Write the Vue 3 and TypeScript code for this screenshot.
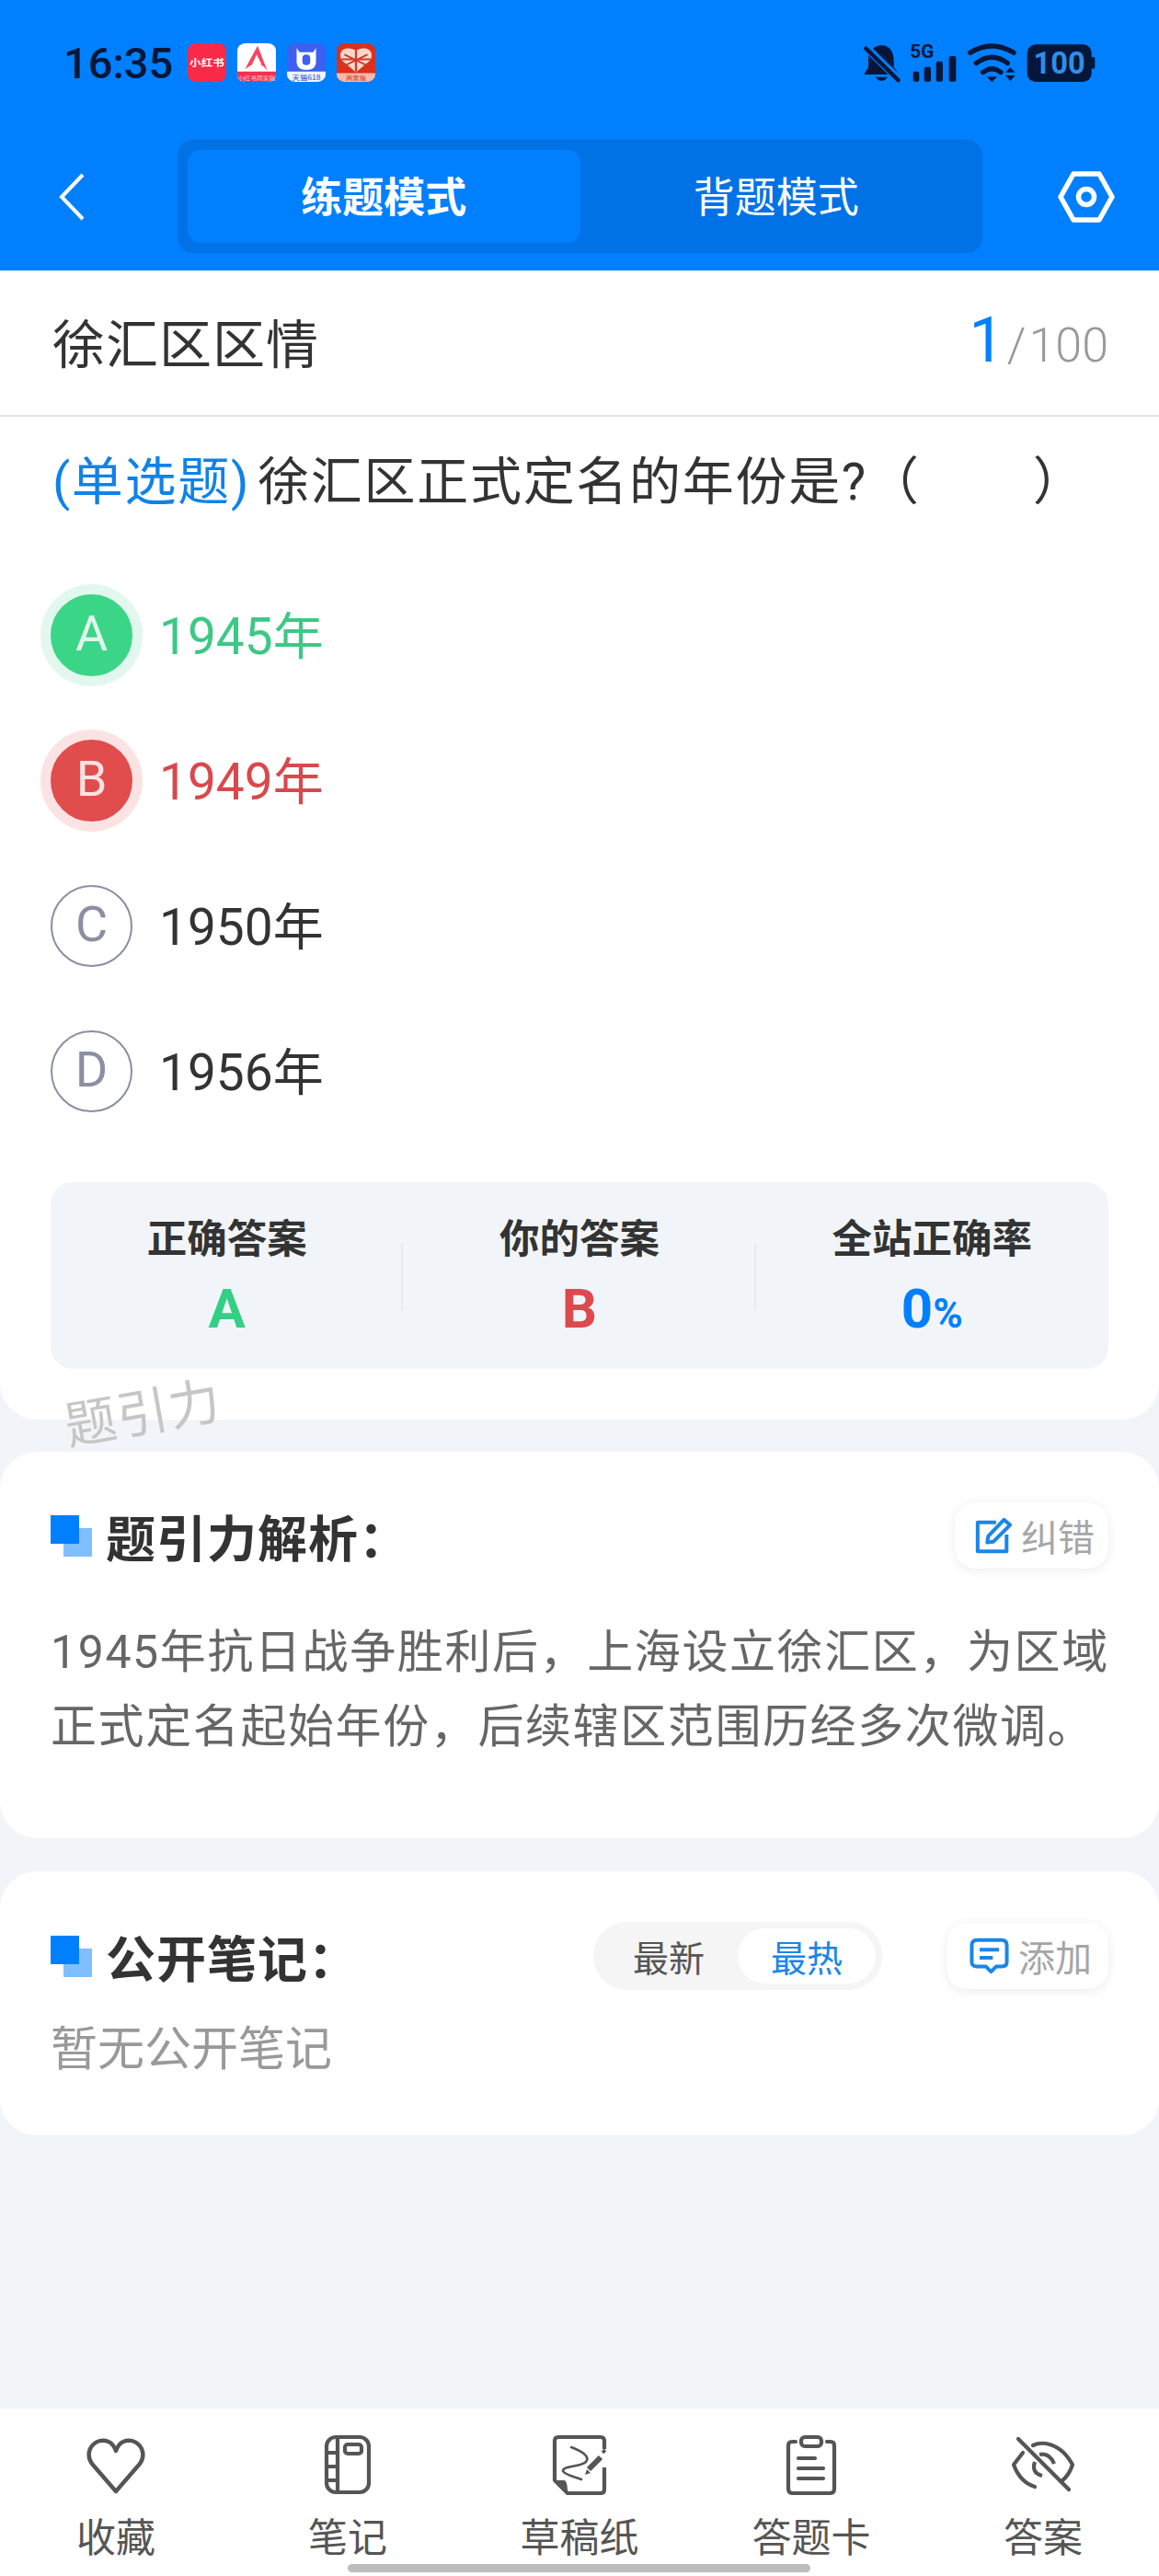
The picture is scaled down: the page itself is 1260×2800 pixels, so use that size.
<script setup lang="ts">
interface Option { key: string; text: string; state: string }
const options: Option[] = [
  { key: 'A', text: '1945年', state: 'right' },
  { key: 'B', text: '1949年', state: 'wrong' },
  { key: 'C', text: '1950年', state: '' },
  { key: 'D', text: '1956年', state: '' },
]
</script>

<template>
  <div class="page">
    <header class="header">
      <div class="status">
        <span class="time">16:35</span>
        <div class="apps">
          <svg class="app" viewBox="0 0 40 48" preserveAspectRatio="none">
            <rect width="40" height="48" rx="9" fill="#fb2a49" />
            <text x="20" y="29" font-size="12" font-weight="700" fill="#fff" text-anchor="middle" font-family="Noto Sans CJK SC">小红书</text>
          </svg>
          <svg class="app" viewBox="0 0 40 48" preserveAspectRatio="none">
            <rect width="40" height="48" rx="9" fill="#fff" />
            <path d="M0 35H40V39a9 9 0 0 1-9 9H9a9 9 0 0 1-9-9Z" fill="#f2304f" />
            <path d="M21 3L31 34Q24 22 16 26L8 32Z" fill="#f2475f" />
            <path d="M20 14L25 26L15 27Z" fill="#fff" />
            <text x="20" y="46" font-size="6.5" fill="#ffd8de" text-anchor="middle" font-family="Noto Sans CJK SC">小红书周家版</text>
          </svg>
          <svg class="app" viewBox="0 0 40 48" preserveAspectRatio="none">
            <rect width="40" height="48" rx="9" fill="#3c60f0" />
            <path d="M0 35H40V39a9 9 0 0 1-9 9H9a9 9 0 0 1-9-9Z" fill="#eef4ff" />
            <path d="M10 6L13 11H27L30 6V24Q30 33 20 33Q10 33 10 24Z" fill="#fff" />
            <rect x="16" y="14" width="8" height="13" rx="4" fill="#3c60f0" />
            <text x="20" y="46" font-size="8" fill="#2446c8" text-anchor="middle" font-family="Noto Sans CJK SC">天猫618</text>
          </svg>
          <svg class="app" viewBox="0 0 40 48" preserveAspectRatio="none">
            <rect width="40" height="48" rx="9" fill="#dc2f1e" />
            <path d="M0 37H40V39a9 9 0 0 1-9 9H9a9 9 0 0 1-9-9Z" fill="#f7b9a8" />
            <path d="M20 36L6 22Q2 16 5 10Q10 3 20 9Q30 3 35 10Q38 16 34 22Z" fill="#f8d8cc" />
            <path d="M20 9V35M8 14L32 28M32 14L8 28M5 20H35" stroke="#d13a27" stroke-width="2.2" fill="none" />
            <text x="20" y="46" font-size="7" fill="#c8321f" text-anchor="middle" font-family="Noto Sans CJK SC">商家版</text>
          </svg>
        </div>
        <svg class="sys" viewBox="0 0 810 195">
          <path d="M85 40C115 40 125 65 125 90V110L142 135H28L42 110V85C42 60 60 40 85 40Z" fill="#04173a" />
          <path d="M65 143Q85 168 105 143Z" fill="#04173a" />
          <path d="M30 42L142 152" stroke="#0080ff" stroke-width="26" />
          <path d="M34 50L140 154" stroke="#04173a" stroke-width="13" stroke-linecap="round" />
          <text x="178" y="82" font-size="62" font-weight="700" fill="#04173a" font-family="Roboto">5G</text>
          <rect x="188" y="125" width="20" height="33" rx="6" fill="#04173a" />
          <rect x="224" y="110" width="22" height="48" rx="6" fill="#04173a" />
          <rect x="263" y="92" width="22" height="66" rx="6" fill="#04173a" />
          <rect x="305" y="75" width="23" height="83" rx="6" fill="#04173a" />
          <path d="M374 64Q445 20 516 64M394 98Q445 60 496 98M416 128Q445 104 474 128" stroke="#04173a" stroke-width="16" stroke-linecap="round" fill="none" />
          <path d="M428 142H462L445 160ZM489 128H521L505 112ZM489 138H521L505 156Z" fill="#04173a" />
          <rect x="560" y="37" width="210" height="122" rx="28" fill="#04173a" />
          <rect x="768" y="78" width="13" height="38" rx="5" fill="#04173a" />
          <text x="665" y="133" font-size="98" font-weight="700" fill="#2f8ee8" text-anchor="middle" font-family="Roboto">100</text>
        </svg>
      </div>
      <nav class="nav">
        <svg class="back" viewBox="0 0 28 52">
          <path d="M26 2L3 26L26 50" stroke="#fff" stroke-width="4" fill="none" />
        </svg>
        <div class="tabs">
          <div class="tab active">练题模式</div>
          <div class="tab">背题模式</div>
        </div>
        <svg class="hex" viewBox="0 0 62 56">
          <path d="M17 3H45L59 28L45 53H17L3 28Z" stroke="#fff" stroke-width="5.5" stroke-linejoin="round" fill="none" />
          <circle cx="31" cy="28" r="8.5" stroke="#fff" stroke-width="5.5" fill="none" />
        </svg>
      </nav>
    </header>

    <section class="card main">
      <div class="title-row">
        <span class="title">徐汇区区情</span>
        <span class="count"><b>1</b><i>/</i>100</span>
      </div>
      <p class="question"><span class="qtype">(单选题)</span>徐汇区正式定名的年份是?（<span class="blank"></span>）</p>
      <div class="options">
        <div v-for="o in options" :key="o.key" class="option" :class="o.state">
          <span class="badge">{{ o.key }}</span>
          <span class="otext">{{ o.text }}</span>
        </div>
      </div>
      <div class="answers">
        <div class="ans">
          <div class="alabel">正确答案</div>
          <div class="aval green">A</div>
        </div>
        <div class="ans split">
          <div class="alabel">你的答案</div>
          <div class="aval red">B</div>
        </div>
        <div class="ans split">
          <div class="alabel">全站正确率</div>
          <div class="aval blue">0<small>%</small></div>
        </div>
      </div>
      <span class="watermark">题引力</span>
    </section>

    <section class="card analysis">
      <div class="head">
        <span class="squares"></span>
        <h2 class="htitle">题引力解析：</h2>
        <div class="btn fix">
          <svg class="bicon" viewBox="0 0 42 42">
            <path d="M24 6H3V39H36V20" stroke="#1a86e8" stroke-width="4.2" fill="none" stroke-linejoin="round" />
            <path d="M15 22L33 3L40 9L21 28L14 29Z" stroke="#1a86e8" stroke-width="4.2" fill="none" stroke-linejoin="round" />
          </svg>
          <span>纠错</span>
        </div>
      </div>
      <p class="body">1945年抗日战争胜利后，上海设立徐汇区，为区域<br />正式定名起始年份，后续辖区范围历经多次微调。</p>
    </section>

    <section class="card notes">
      <div class="head">
        <span class="squares"></span>
        <h2 class="htitle">公开笔记：</h2>
        <div class="seg">
          <span class="segitem">最新</span>
          <span class="segitem on">最热</span>
        </div>
        <div class="btn add">
          <svg class="bicon wide" viewBox="0 0 44 42">
            <path d="M8 3H36Q42 3 42 9V28Q42 33 36 33H30L24 39L18 33H8Q2 33 2 28V9Q2 3 8 3Z" stroke="#1a86e8" stroke-width="4.2" fill="none" stroke-linejoin="round" />
            <path d="M11 14H33M11 23H26" stroke="#1a86e8" stroke-width="4.2" fill="none" />
          </svg>
          <span>添加</span>
        </div>
      </div>
      <p class="empty">暂无公开笔记</p>
    </section>

    <footer class="bar">
      <div class="item">
        <svg class="ico" width="68" height="66" viewBox="0 0 68 66">
          <path d="M34 62L8 32C-2 18 12 2 26 8Q31 10 34 18Q37 10 42 8C56 2 70 18 60 32Z" stroke="#555" stroke-width="4.4" fill="none" stroke-linejoin="round" />
        </svg>
        <span>收藏</span>
      </div>
      <div class="item">
        <svg class="ico" width="52" height="66" viewBox="0 0 52 66">
          <rect x="3" y="3" width="46" height="60" rx="10" stroke="#555" stroke-width="4.2" fill="none" />
          <path d="M15 3V63M3 20H15M3 35H15M3 50H15" stroke="#555" stroke-width="4.2" fill="none" />
          <rect x="23" y="11" width="18" height="10" rx="3" stroke="#555" stroke-width="4.2" fill="none" />
        </svg>
        <span>笔记</span>
      </div>
      <div class="item">
        <svg class="ico" width="60" height="66" viewBox="0 0 60 66">
          <path d="M57 16V7Q57 3 53 3H7Q3 3 3 7V50L17 64H53Q57 64 57 60V36" stroke="#555" stroke-width="4.2" fill="none" stroke-linejoin="round" />
          <path d="M3 50H14Q17 52 17 64Z" fill="#555" />
          <path d="M21 14C32 18 42 24 37 30C30 36 11 34 12 40C14 44 24 46 32 49" stroke="#555" stroke-width="2.6" fill="none" stroke-linecap="round" />
          <path d="M53 25L40 38" stroke="#555" stroke-width="6" />
          <path d="M55 20L58 17" stroke="#555" stroke-width="3.5" />
          <path d="M38 38L36 44L42 42Z" fill="#555" />
        </svg>
        <span>草稿纸</span>
      </div>
      <div class="item">
        <svg class="ico" width="56" height="66" viewBox="0 0 56 66">
          <path d="M11 8H7Q3 8 3 12V59Q3 64 8 64H48Q53 64 53 59V12Q53 8 49 8H45" stroke="#555" stroke-width="4.2" fill="none" stroke-linecap="round" />
          <rect x="17" y="3" width="22" height="10" rx="4" stroke="#555" stroke-width="4.2" fill="none" />
          <path d="M14 26H32M14 37H41M14 48H41" stroke="#555" stroke-width="4.2" stroke-linecap="round" fill="none" />
        </svg>
        <span>答题卡</span>
      </div>
      <div class="item">
        <svg class="ico" width="70" height="66" viewBox="0 0 70 66">
          <path d="M13 20L3 33Q10 52 26 57M24 12Q30 9 38 10Q56 13 67 33Q63 45 55 51" stroke="#555" stroke-width="4.2" fill="none" stroke-linecap="round" stroke-linejoin="round" />
          <path d="M8 5L63 60" stroke="#555" stroke-width="4.2" stroke-linecap="round" />
          <path d="M31 22Q42 20 47 32M26 30Q22 42 34 45" stroke="#555" stroke-width="4.2" fill="none" />
        </svg>
        <span>答案</span>
      </div>
      <span class="home"></span>
    </footer>
  </div>
</template>

<style scoped>
.page {
  position: relative;
  display: flex;
  flex-direction: column;
  width: 1260px;
  min-height: 2800px;
  background: #f1f5f9;
  font-family: Roboto, "Noto Sans CJK SC", sans-serif;
  color: #333;
}
.header {
  height: 294px;
  background: #0080ff;
  flex-shrink: 0;
}
.status {
  display: flex;
  align-items: center;
  height: 136px;
  padding-left: 69px;
}
.time {
  width: 135px;
  font-size: 47px;
  font-weight: 500;
  color: #04173a;
}
.apps {
  display: flex;
  gap: 12px;
}
.app {
  width: 42px;
  height: 42px;
  display: block;
}
.sys {
  width: 270px;
  height: 65px;
  margin-left: 522px;
}
.nav {
  display: flex;
  align-items: center;
  height: 155px;
  padding-left: 64px;
}
.back {
  width: 28px;
  height: 52px;
}
.tabs {
  display: flex;
  width: 875px;
  height: 123px;
  margin-left: 101px;
  padding: 11px;
  box-sizing: border-box;
  background: #0072e6;
  border-radius: 16px;
}
.tab {
  flex: 1;
  display: flex;
  align-items: center;
  justify-content: center;
  padding-bottom: 5px;
  box-sizing: border-box;
  font-size: 45px;
  color: #fff;
  border-radius: 14px;
}
.tab.active {
  background: #0080ff;
  font-weight: 700;
}
.hex {
  width: 62px;
  height: 56px;
  margin-left: 82px;
}
.card {
  background: #fff;
  flex-shrink: 0;
}
.main {
  position: relative;
  border-radius: 0 0 40px 40px;
  padding-bottom: 55px;
}
.title-row {
  display: flex;
  align-items: center;
  justify-content: space-between;
  height: 157px;
  padding: 0 55px 0 57px;
  border-bottom: 2px solid #e2e2e2;
}
.title {
  padding-bottom: 6px;
  font-size: 57px;
  letter-spacing: 1px;
}
.count {
  display: flex;
  align-items: baseline;
  padding-bottom: 6px;
  font-size: 52px;
  font-weight: 300;
  color: #999;
}
.count b {
  font-size: 68px;
  font-weight: 400;
  color: #0080ff;
  margin-right: 3px;
}
.count i {
  font-style: normal;
  margin-right: 3px;
}
.question {
  margin: 0;
  padding: 31px 0 0 57px;
  font-size: 56px;
  line-height: 80px;
  letter-spacing: 1.7px;
  white-space: nowrap;
}
.qtype {
  margin-right: 8px;
  color: #0f82ea;
}
.blank {
  display: inline-block;
  width: 122px;
}
.options {
  margin-top: 47px;
  padding-left: 55px;
}
.option {
  display: flex;
  align-items: center;
  height: 158px;
}
.badge {
  width: 89px;
  height: 89px;
  box-sizing: border-box;
  display: flex;
  align-items: center;
  justify-content: center;
  padding-bottom: 3px;
  border-radius: 50%;
  border: 2.5px solid #8a8fa3;
  font-size: 54px;
  font-weight: 400;
  color: #8a8fa3;
}
.otext {
  margin-left: 29px;
  padding-bottom: 6px;
  font-size: 55px;
}
.right .badge {
  background: #3bd587;
  border-color: #3bd587;
  color: #e0f8ec;
  box-shadow: 0 0 0 11px #e2f8ee;
}
.right .otext {
  color: #3cc886;
}
.wrong .badge {
  background: #e14d4d;
  border-color: #e14d4d;
  color: #fbe3e3;
  box-shadow: 0 0 0 11px #fbe3e3;
}
.wrong .otext {
  color: #d9484c;
}
.answers {
  display: grid;
  grid-template-columns: repeat(3, 1fr);
  margin: 42px 55px 0;
  padding: 38px 0 30px;
  background: #f1f5f9;
  border-radius: 24px;
}
.ans {
  position: relative;
  text-align: center;
}
.split::before {
  content: "";
  position: absolute;
  left: -2px;
  top: 28px;
  height: 73px;
  border-left: 2px solid #e7ebf0;
}
.alabel {
  font-size: 43.5px;
  line-height: 50px;
  font-weight: 700;
}
.aval {
  margin-top: 20px;
  font-size: 60px;
  line-height: 60px;
  font-weight: 700;
}
.aval small {
  font-size: 44px;
}
.green { color: #33cf85; }
.red { color: #dd4a4e; }
.blue { color: #0080ff; }
.watermark {
  position: absolute;
  left: 70px;
  top: 1208px;
  font-size: 56px;
  letter-spacing: 1px;
  font-weight: 400;
  line-height: 70px;
  color: #c6c6c6;
  transform: rotate(-10deg);
}
.analysis {
  margin-top: 35px;
  border-radius: 40px;
  padding: 55px 55px 80px;
}
.notes {
  margin-top: 36px;
  border-radius: 40px;
  padding: 56px 55px 63px;
}
.head {
  display: flex;
  align-items: center;
  height: 72px;
}
.squares {
  position: relative;
  width: 45px;
  height: 45px;
  flex-shrink: 0;
}
.squares::before,
.squares::after {
  content: "";
  position: absolute;
  width: 31px;
  height: 31px;
}
.squares::before {
  right: 0;
  bottom: 0;
  background: #80bfff;
}
.squares::after {
  left: 0;
  top: 0;
  background: #0080ff;
}
.htitle {
  flex: 1;
  margin: 0 0 0 15px;
  font-size: 54px;
  letter-spacing: 1px;
  font-weight: 700;
}
.btn {
  display: flex;
  align-items: center;
  justify-content: center;
  height: 72px;
  padding-left: 7px;
  box-sizing: border-box;
  background: #fff;
  border-radius: 22px;
  box-shadow: 0 2px 12px rgba(0, 0, 0, 0.08);
  font-size: 40px;
  color: #a6a6a6;
}
.fix {
  width: 167px;
}
.add {
  width: 176px;
  margin-left: 70px;
}
.bicon {
  width: 40px;
  height: 40px;
  margin-right: 10px;
}
.bicon.wide {
  width: 43px;
}
.seg {
  display: flex;
  padding: 7px;
  background: #f5f5f5;
  border-radius: 37px;
}
.segitem {
  width: 150px;
  height: 60px;
  display: flex;
  align-items: center;
  justify-content: center;
  border-radius: 30px;
  font-size: 39px;
  color: #555;
}
.segitem.on {
  background: #fff;
  color: #1a86e8;
}
.body {
  margin: 51px 0 0;
  font-size: 50px;
  line-height: 81px;
  letter-spacing: 1.6px;
  color: #666;
  white-space: nowrap;
}
.empty {
  margin: 36px 0 0;
  font-size: 51px;
  line-height: 60px;
  color: #999;
}
.bar {
  position: relative;
  display: flex;
  margin-top: auto;
  height: 182px;
  box-sizing: border-box;
  padding-top: 28px;
  background: #fff;
  flex-shrink: 0;
}
.item {
  flex: 1;
  display: flex;
  flex-direction: column;
  align-items: center;
  font-size: 43px;
  line-height: 50px;
  color: #555;
}
.ico {
  display: block;
  margin-bottom: 22px;
}
.home {
  position: absolute;
  left: 378px;
  bottom: 4px;
  width: 503px;
  height: 9px;
  border-radius: 5px;
  background: #bdbdbd;
}
</style>
